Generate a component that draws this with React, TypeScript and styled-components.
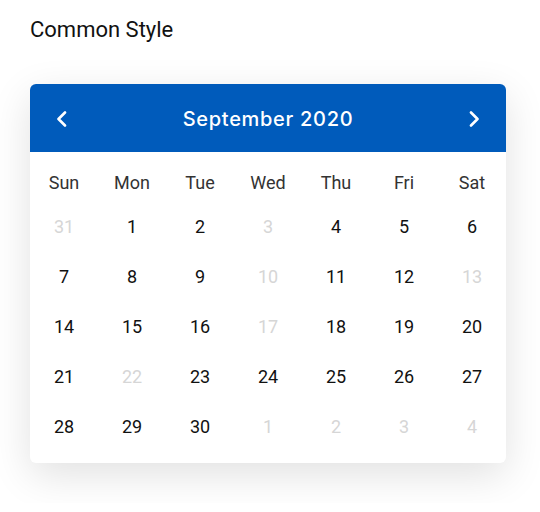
import React from "react";
import styled, { createGlobalStyle } from "styled-components";

const Global = createGlobalStyle`
  html, body { margin: 0; padding: 0; background: #fff; }
  body { font-family: Roboto, "Liberation Sans", Arial, sans-serif; }
`;

const Page = styled.div`
  padding: 14px 34px 40px 30px;
  width: 476px;
`;

const Title = styled.h1`
  margin: 0;
  font-family: Roboto, sans-serif;
  font-weight: 400;
  font-size: 22px;
  line-height: 32px;
  color: #111;
`;

const Card = styled.div`
  margin-top: 38px;
  width: 476px;
  border-radius: 6px;
  background: #fff;
  box-shadow: 0 12px 40px rgba(0, 0, 0, 0.12);
  overflow: hidden;
`;

const Header = styled.div`
  height: 68px;
  background: #005bbb;
  display: flex;
  align-items: center;
  justify-content: space-between;
  padding: 2px 20px 0;
  box-sizing: border-box;
  color: #fff;
`;

const NavButton = styled.button`
  width: 24px;
  height: 24px;
  padding: 0;
  border: 0;
  background: transparent;
  display: flex;
  align-items: center;
  justify-content: center;
  cursor: pointer;
`;

const MonthLabel = styled.div`
  font-family: Inter, "Liberation Sans", Arial, sans-serif;
  font-weight: 500;
  font-size: 20px;
  letter-spacing: 0.7px;
`;

const Body = styled.div`
  padding: 11px 0 12px;
`;

const Grid = styled.div<{ $rowHeight: number }>`
  display: grid;
  grid-template-columns: repeat(7, 1fr);
  grid-auto-rows: ${(p) => p.$rowHeight}px;
`;

const WeekDay = styled.div`
  display: flex;
  align-items: center;
  justify-content: center;
  font-size: 18px;
  color: #333;
`;

const Day = styled.div<{ $muted: boolean }>`
  display: flex;
  align-items: center;
  justify-content: center;
  font-size: 18px;
  color: ${(p) => (p.$muted ? "#d6d6d6" : "#111")};
`;

const Chevron = ({ dir }: { dir: "left" | "right" }) => (
  <svg width="14" height="16" viewBox="0 0 14 16" fill="none">
    <path
      d={dir === "left" ? "M10 1.5 L3.5 8 L10 14.5" : "M4 1.5 L10.5 8 L4 14.5"}
      stroke="#fff"
      strokeWidth="2.6"
      strokeLinecap="round"
      strokeLinejoin="round"
    />
  </svg>
);

const weekDays = ["Sun", "Mon", "Tue", "Wed", "Thu", "Fri", "Sat"];

const days: { n: number; muted?: boolean }[] = [
  { n: 31, muted: true }, { n: 1 }, { n: 2 }, { n: 3, muted: true }, { n: 4 }, { n: 5 }, { n: 6 },
  { n: 7 }, { n: 8 }, { n: 9 }, { n: 10, muted: true }, { n: 11 }, { n: 12 }, { n: 13, muted: true },
  { n: 14 }, { n: 15 }, { n: 16 }, { n: 17, muted: true }, { n: 18 }, { n: 19 }, { n: 20 },
  { n: 21 }, { n: 22, muted: true }, { n: 23 }, { n: 24 }, { n: 25 }, { n: 26 }, { n: 27 },
  { n: 28 }, { n: 29 }, { n: 30 }, { n: 1, muted: true }, { n: 2, muted: true }, { n: 3, muted: true }, { n: 4, muted: true },
];

export default function App() {
  return (
    <>
      <Global />
      <Page>
        <Title>Common Style</Title>
        <Card>
          <Header>
            <NavButton aria-label="Previous month">
              <Chevron dir="left" />
            </NavButton>
            <MonthLabel>September 2020</MonthLabel>
            <NavButton aria-label="Next month">
              <Chevron dir="right" />
            </NavButton>
          </Header>
          <Body>
            <Grid $rowHeight={38}>
              {weekDays.map((d) => (
                <WeekDay key={d}>{d}</WeekDay>
              ))}
            </Grid>
            <Grid $rowHeight={50}>
              {days.map((d, i) => (
                <Day key={i} $muted={!!d.muted}>
                  {d.n}
                </Day>
              ))}
            </Grid>
          </Body>
        </Card>
      </Page>
    </>
  );
}
